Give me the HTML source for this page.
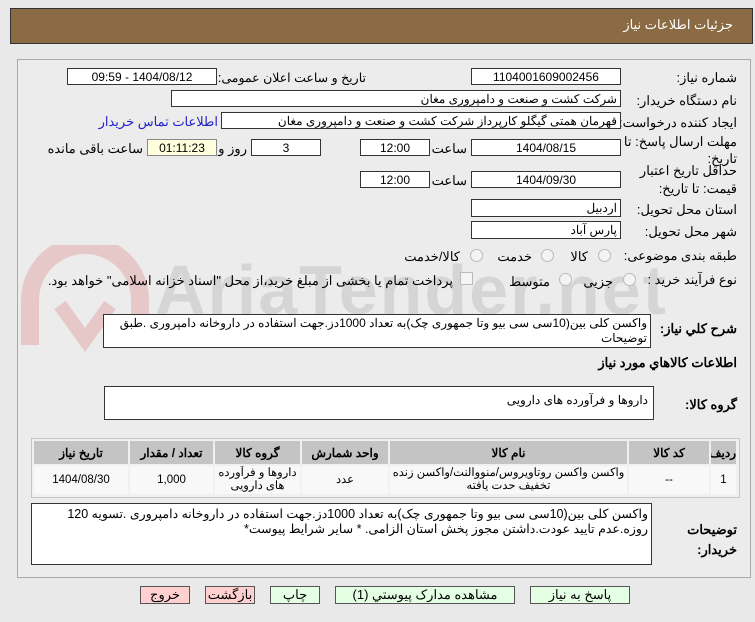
<!DOCTYPE html>
<html><head><meta charset="utf-8"><style>
body{margin:0;width:755px;height:622px;background:#e9e9e9;font-family:"Liberation Sans","Noto Sans CJK SC",sans-serif;font-size:12px;color:#000;position:relative;overflow:hidden}
.a{position:absolute;white-space:nowrap}
.hdr{left:10px;top:8px;width:741px;height:34px;background:#8b6b43;border:1px solid #333}
.pan{left:17px;top:59px;width:732px;height:517px;border:1px solid #aaa;background:#ececec}
.in{position:absolute;background:#fff;border:1px solid #333;height:17px;line-height:17px;font-size:12px;box-sizing:border-box;direction:rtl;padding:0 3px;white-space:nowrap;overflow:hidden}
.c{text-align:center}
.l{position:absolute;direction:rtl;white-space:nowrap;font-size:13px}
.w{white-space:normal}
.rad{position:absolute;width:11px;height:11px;border:1px solid #bbb;border-radius:50%;background:#f4f4f4}
table{border-collapse:separate;border-spacing:2px;table-layout:fixed}
td{padding:0;white-space:normal;overflow:hidden}
.btn{position:absolute;top:586px;height:18px;border:1px solid #555;box-sizing:border-box;text-align:center;line-height:16px;font-size:13px}
</style></head><body>
<div class="a hdr"></div>
<div class="a" style="right:22px;top:17px;color:#fff;font-size:13px;direction:rtl">جزئیات اطلاعات نیاز</div>
<div class="a pan"></div>
<svg class="a" style="left:20px;top:245px;opacity:.15" width="130" height="110"><path d="M10 100 L10 55 A55 55 0 0 1 120 55 L120 100" fill="none" stroke="#c00" stroke-width="18"/><path d="M40 60 L65 95 L90 60" fill="none" stroke="#c00" stroke-width="14"/></svg>
<div class="a" style="left:155px;top:250px;font-size:70px;font-weight:bold;color:#000;opacity:.09;letter-spacing:2px">AriaTender.net</div>

<div class="l" style="right:18px;top:70px">شماره نیاز:</div>
<div class="in c" style="left:471px;top:68px;width:150px">1104001609002456</div>
<div class="l" style="right:389px;top:70px;font-size:12.5px">تاریخ و ساعت اعلان عمومی:</div>
<div class="in c" style="left:67px;top:68px;width:150px">1404/08/12 - 09:59</div>

<div class="l" style="right:18px;top:93px">نام دستگاه خریدار:</div>
<div class="in" style="left:171px;top:90px;width:450px">شرکت کشت و صنعت و دامپروری مغان</div>

<div class="l" style="right:18px;top:115px">ایجاد کننده درخواست:</div>
<div class="in" style="left:221px;top:112px;width:400px">قهرمان همتی گیگلو کارپرداز شرکت کشت و صنعت و دامپروری مغان</div>
<div class="l" style="right:537px;top:114px;color:#2222cc">اطلاعات تماس خریدار</div>

<div class="l w" style="right:18px;top:133px;line-height:17px;width:125px">مهلت ارسال پاسخ: تا تاریخ:</div>
<div class="in c" style="left:471px;top:139px;width:150px">1404/08/15</div>
<div class="l" style="right:288px;top:141px">ساعت</div>
<div class="in c" style="left:360px;top:139px;width:70px">12:00</div>
<div class="in c" style="left:251px;top:139px;width:70px">3</div>
<div class="l" style="right:508px;top:141px">روز و</div>
<div class="in c" style="left:147px;top:139px;width:70px;background:#ffffdd;border-color:#888">01:11:23</div>
<div class="l" style="right:612px;top:141px">ساعت باقی مانده</div>

<div class="l w" style="right:18px;top:162px;line-height:18px;width:100px">حداقل تاریخ اعتبار قیمت: تا تاریخ:</div>
<div class="in c" style="left:471px;top:171px;width:150px">1404/09/30</div>
<div class="l" style="right:288px;top:173px">ساعت</div>
<div class="in c" style="left:360px;top:171px;width:70px">12:00</div>

<div class="l" style="right:18px;top:202px">استان محل تحویل:</div>
<div class="in" style="left:471px;top:199px;width:150px;height:18px">اردبیل</div>
<div class="l" style="right:18px;top:224px">شهر محل تحویل:</div>
<div class="in" style="left:471px;top:221px;width:150px;height:18px">پارس آباد</div>

<div class="l" style="right:18px;top:248px">طبقه بندی موضوعی:</div>
<div class="rad" style="left:598px;top:249px"></div><div class="l" style="right:167px;top:249px">کالا</div>
<div class="rad" style="left:541px;top:249px"></div><div class="l" style="right:223px;top:249px">خدمت</div>
<div class="rad" style="left:470px;top:249px"></div><div class="l" style="right:295px;top:249px">کالا/خدمت</div>

<div class="l" style="right:18px;top:272px">نوع فرآیند خرید :</div>
<div class="rad" style="left:623px;top:273px"></div><div class="l" style="right:142px;top:274px">جزیی</div>
<div class="rad" style="left:559px;top:273px"></div><div class="l" style="right:205px;top:274px">متوسط</div>
<div class="a" style="left:460px;top:272px;width:11px;height:11px;border:1px solid #bbb;background:#f4f4f4"></div>
<div class="l" style="right:302px;top:273px">پرداخت تمام یا بخشی از مبلغ خرید،از محل "اسناد خزانه اسلامی" خواهد بود.</div>

<div class="l" style="right:18px;top:321px;font-weight:bold">شرح کلي نياز:</div>
<div class="in" style="left:103px;top:314px;width:548px;height:34px;line-height:15px;white-space:normal;padding-top:1px">واکسن کلی بین(10سی سی بیو وتا جمهوری چک)به تعداد 1000دز.جهت استفاده در داروخانه دامپروری .طبق توضیحات</div>
<div class="l" style="right:18px;top:355px;font-weight:bold">اطلاعات کالاهاي مورد نياز</div>
<div class="l" style="right:18px;top:397px;font-weight:bold">گروه کالا:</div>
<div class="in" style="left:104px;top:386px;width:550px;height:34px;line-height:15px;padding-top:6px;padding-right:5px">داروها و فرآورده های دارویی</div>

<div class="a" style="left:31px;top:438px;width:707px;height:58px;border:1px solid #c4c4c4;background:#f0f0f0"></div>
<table style="position:absolute;left:32px;top:439px;width:706px;direction:rtl;font-size:12px;text-align:center">
<colgroup><col style="width:25px"><col style="width:80px"><col style="width:237px"><col style="width:86px"><col style="width:85px"><col style="width:83px"><col></colgroup>
<tr style="background:#c4c4c4;font-weight:bold;height:23px"><td>ردیف</td><td>کد کالا</td><td>نام کالا</td><td>واحد شمارش</td><td>گروه کالا</td><td>تعداد / مقدار</td><td>تاریخ نیاز</td></tr>
<tr style="background:#f8f8f8;height:28px;line-height:13px;font-size:11.5px"><td>1</td><td>--</td><td>واکسن واکسن روتاویروس/منووالنت/واکسن زنده تخفیف حدت یافته</td><td>عدد</td><td>داروها و فرآورده<br>های دارویی</td><td>1,000</td><td>1404/08/30</td></tr>
</table>

<div class="l w" style="right:18px;top:520px;font-weight:bold;line-height:20px;width:60px">توضیحات خریدار:</div>
<div class="in" style="left:31px;top:503px;width:621px;height:62px;line-height:15px;white-space:normal;padding-top:3px;font-size:12.5px">واکسن کلی بین(10سی سی بیو وتا جمهوری چک)به تعداد 1000دز.جهت استفاده در داروخانه دامپروری .تسویه 120 روزه.عدم تایید عودت.داشتن مجوز پخش استان الزامی. * سایر شرایط پیوست*</div>

<div class="btn" style="left:530px;width:100px;background:#e4ffe4">پاسخ به نیاز</div>
<div class="btn" style="left:335px;width:180px;background:#e4ffe4">مشاهده مدارک پیوستي (1)</div>
<div class="btn" style="left:270px;width:50px;background:#e4ffe4">چاپ</div>
<div class="btn" style="left:205px;width:50px;background:#ffd0d0">بازگشت</div>
<div class="btn" style="left:140px;width:50px;background:#ffd0d0">خروج</div>
</body></html>
